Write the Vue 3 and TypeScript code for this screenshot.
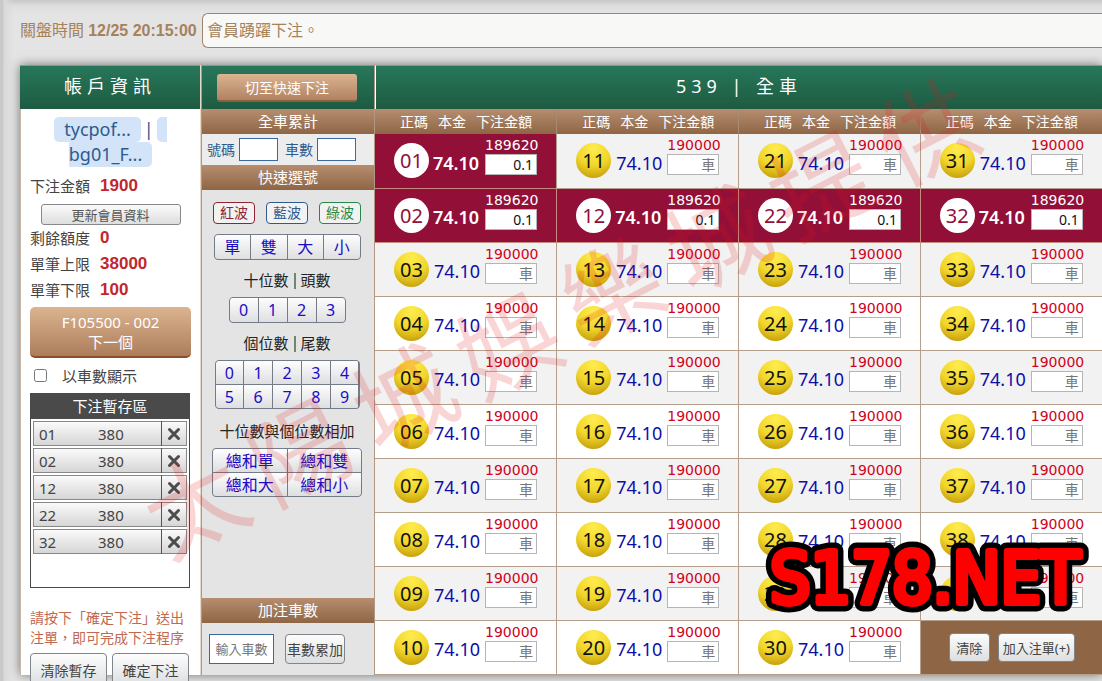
<script setup lang="ts">
import { reactive, ref } from 'vue'

interface Slot {
  no: string
  odds: string
}

const pad = (n: number): string => String(n).padStart(2, '0')

const rows: Slot[][] = Array.from({ length: 10 }, (_, r) =>
  [0, 10, 20, 30]
    .map((base) => base + r + 1)
    .filter((n) => n < 40)
    .map((n) => ({ no: pad(n), odds: '74.10' })),
)

const stakes = reactive<Record<string, string>>({
  '01': '0.1',
  '02': '0.1',
  '12': '0.1',
  '22': '0.1',
  '32': '0.1',
})

const pending = ref(['01', '02', '12', '22', '32'].map((no) => ({ no, amount: 380 })))
const showCars = ref(false)
const limitFor = (no: string): string => (stakes[no] ? '189620' : '190000')

const limits = [
  { label: '剩餘額度', value: '0' },
  { label: '單筆上限', value: '38000' },
  { label: '單筆下限', value: '100' },
]
const waves = [
  { text: '紅波', tone: 'red' },
  { text: '藍波', tone: 'blue' },
  { text: '綠波', tone: 'green' },
]
const kinds = ['單', '雙', '大', '小']
const heads = ['0', '1', '2', '3']
const tails = ['0', '1', '2', '3', '4', '5', '6', '7', '8', '9']
const sums = ['總和單', '總和雙', '總和大', '總和小']
const watermark = [...'太陽城娛樂城提供']

function removeBet(no: string): void {
  pending.value = pending.value.filter((bet) => bet.no !== no)
}

function clearStakes(): void {
  Object.keys(stakes).forEach((key) => delete stakes[key])
}
</script>

<template>
  <div class="page">
    <header class="topbar">
      <div class="closing">關盤時間 <b>12/25 20:15:00</b></div>
      <div class="news">會員踴躍下注。</div>
    </header>

    <main class="board">
      <aside class="account">
        <h2 class="title">帳戶資訊</h2>
        <div class="account-body">
          <div class="names">
            <div class="name-line">
              <span class="tag">tycpof...</span><span class="bar">|</span><span class="tag-start"></span>
            </div>
            <div class="name-line"><span class="tag tag-end">bg01_F...</span></div>
          </div>
          <div class="info">下注金額 <b>1900</b></div>
          <button class="refresh" type="button">更新會員資料</button>
          <div v-for="item in limits" :key="item.label" class="info">
            {{ item.label }} <b>{{ item.value }}</b>
          </div>
          <button class="next" type="button">F105500 - 002<br />下一個</button>
          <label class="check"><input v-model="showCars" type="checkbox" />以車數顯示</label>
          <section class="pending">
            <h3>下注暫存區</h3>
            <ul>
              <li v-for="bet in pending" :key="bet.no">
                <span class="bet-no">{{ bet.no }}</span>
                <span class="bet-amount">{{ bet.amount }}</span>
                <button type="button" :aria-label="`刪除 ${bet.no}`" @click="removeBet(bet.no)">
                  <svg width="14" height="14" viewBox="0 0 14 14">
                    <path d="M2.5 2.5 11.5 11.5M11.5 2.5 2.5 11.5" fill="none" stroke="#4c4c4c" stroke-width="3" stroke-linecap="round" />
                  </svg>
                </button>
              </li>
            </ul>
          </section>
          <p class="hint">請按下「確定下注」送出注單，即可完成下注程序</p>
          <div class="confirm">
            <button type="button">清除暫存</button>
            <button type="button">確定下注</button>
          </div>
        </div>
      </aside>

      <section class="quick">
        <div class="title"><button class="switch" type="button">切至快速下注</button></div>
        <h3 class="strip">全車累計</h3>
        <div class="totals">
          <label for="sum-no">號碼</label><input id="sum-no" type="text" />
          <label for="sum-car">車數</label><input id="sum-car" type="text" />
        </div>
        <h3 class="strip">快速選號</h3>
        <div class="picker">
          <div class="waves">
            <button v-for="w in waves" :key="w.text" type="button" :class="w.tone">{{ w.text }}</button>
          </div>
          <div class="keys keys-kind">
            <button v-for="k in kinds" :key="k" type="button">{{ k }}</button>
          </div>
          <p>十位數<i></i>頭數</p>
          <div class="keys keys-head">
            <button v-for="k in heads" :key="k" type="button">{{ k }}</button>
          </div>
          <p>個位數<i></i>尾數</p>
          <div class="keys keys-tail">
            <button v-for="k in tails" :key="k" type="button">{{ k }}</button>
          </div>
          <p class="wide">十位數與個位數相加</p>
          <div class="keys keys-sum">
            <button v-for="k in sums" :key="k" type="button">{{ k }}</button>
          </div>
        </div>
        <h3 class="strip">加注車數</h3>
        <div class="add">
          <input type="text" placeholder="輸入車數" aria-label="輸入車數" />
          <button type="button">車數累加</button>
        </div>
      </section>

      <section class="game">
        <h2 class="title">539 | 全車</h2>
        <table>
          <thead>
            <tr>
              <th v-for="n in 4" :key="n" scope="col">
                <span class="heads"><span>正碼</span><span>本金</span><span>下注金額</span></span>
              </th>
            </tr>
          </thead>
          <tbody>
            <tr v-for="(row, r) in rows" :key="r">
              <td v-for="slot in row" :key="slot.no" :class="{ picked: stakes[slot.no] }">
                <div class="slot">
                  <span class="ball">{{ slot.no }}</span>
                  <span class="odds">{{ slot.odds }}</span>
                  <label class="stake">
                    <span>{{ limitFor(slot.no) }}</span>
                    <input v-model="stakes[slot.no]" type="text" placeholder="車" />
                  </label>
                </div>
              </td>
              <td v-if="row.length < 4" class="actions">
                <div>
                  <button type="button" @click="clearStakes">清除</button>
                  <button type="button">加入注單(+)</button>
                </div>
              </td>
            </tr>
          </tbody>
        </table>
      </section>
    </main>

    <div class="watermark" aria-hidden="true">
      <span v-for="(ch, i) in watermark" :key="i">{{ ch }}</span>
    </div>
    <svg class="brand" width="344" height="92" viewBox="0 0 344 92">
      <text x="172" y="71" text-anchor="middle" class="brand-edge">S178.NET</text>
      <text x="172" y="71" text-anchor="middle" class="brand-face" aria-hidden="true">S178.NET</text>
    </svg>
  </div>
</template>

<style>
body {
  margin: 0;
}
</style>

<style scoped>
.page,
.page * {
  box-sizing: border-box;
}
.page {
  position: relative;
  height: 100vh;
  overflow: hidden;
  padding-left: 20px;
  background:
    linear-gradient(90deg, #c9c9c9 0, #c9c9c9 3px, #dadada 4px, rgba(226, 226, 226, 0) 14px),
    linear-gradient(#c8c8c8 0, #dedede 6px, #e4e4e4 14px, #e4e4e4);
  font-family: 'Noto Sans', 'Noto Sans CJK TC', sans-serif;
  font-size: 15px;
  line-height: 20px;
  color: #444;
}
button,
input {
  font-family: inherit;
  margin: 0;
  padding: 0;
}
button {
  cursor: pointer;
}
h2,
h3,
p,
ul {
  margin: 0;
  padding: 0;
  font-weight: 400;
  list-style: none;
}

.topbar {
  display: flex;
  align-items: center;
  height: 65px;
  padding: 0 0 5px;
  font-size: 16px;
  color: #a5825c;
}
.closing {
  width: 182px;
  white-space: nowrap;
}
.closing b,
.info b {
  font-family: 'Liberation Sans', Arial, sans-serif;
}
.news {
  flex: 1;
  height: 35px;
  padding-left: 4px;
  line-height: 33px;
  border: 1px solid #a08468;
  border-right: 0;
  border-radius: 6px 0 0 6px;
  background: #f8f8f6;
}

.board {
  display: grid;
  grid-template-columns: 181px 174px 1fr;
  box-shadow: 0 0 10px rgba(0, 0, 0, 0.5);
  background: #fff;
}
.title {
  height: 44px;
  line-height: 41px;
  text-align: center;
  font-size: 18px;
  letter-spacing: 5px;
  color: #fff;
  background: linear-gradient(#27775a, #1d5b42);
  border-top: 1px solid #a58c74;
}

.account {
  border-left: 1px solid #c9b8a8;
  border-right: 1px solid #e6d8c8;
}
.account .title {
  margin-left: -1px;
}
.account-body {
  padding: 8px 9px 0;
}
.names {
  font-size: 18px;
  line-height: 25px;
  color: #2d5b8e;
  margin-bottom: 6px;
}
.name-line {
  display: flex;
  justify-content: center;
}
.tag {
  padding: 0 10px;
  border-radius: 5px;
  background: #d3e3f8;
}
.tag-end {
  padding-left: 0;
  border-radius: 0 5px 5px 0;
}
.bar {
  width: 16px;
  text-align: center;
}
.tag-start {
  width: 10px;
  border-radius: 5px 0 0 5px;
  background: #d3e3f8;
}
.info {
  display: flex;
  gap: 10px;
  height: 26px;
  line-height: 26px;
}
.info b {
  font-size: 17px;
  color: #c1272d;
}
.refresh {
  display: block;
  width: 140px;
  height: 21px;
  margin: 5px auto 0;
  line-height: 18px;
  font-size: 13px;
  color: #555;
  border: 1px solid #888;
  border-radius: 3px;
  background: linear-gradient(#fafafa, #dcdfdd);
}
.next {
  display: block;
  width: 100%;
  height: 51px;
  margin-top: 4px;
  line-height: 20px;
  font-size: 15px;
  color: #fff;
  border: 0;
  border-bottom: 2px solid #8a4f2a;
  border-radius: 5px;
  background: linear-gradient(#dcb48f, #ac7d5c);
}
.check {
  display: flex;
  align-items: center;
  gap: 15px;
  height: 35px;
  padding-left: 4px;
}
.check input {
  width: 13px;
  height: 13px;
}
.pending {
  height: 195px;
  margin-right: 1px;
  border: 1px solid #4a4a4a;
}
.pending h3 {
  height: 25px;
  line-height: 25px;
  text-align: center;
  font-size: 15px;
  color: #fff;
  background: #4a4a4a;
}
.pending ul {
  display: grid;
  gap: 2px;
  padding: 2px;
}
.pending li {
  display: flex;
  align-items: center;
  height: 25px;
  padding-left: 5px;
  border: 1px solid #888;
  background: linear-gradient(#fafafa, #d6d6d6);
}
.bet-no {
  width: 40px;
}
.bet-amount {
  flex: 1;
  padding-left: 19px;
}
.pending li button {
  display: flex;
  align-items: center;
  justify-content: center;
  width: 25px;
  height: 25px;
  border: 0;
  border-left: 1px solid #555;
  background: none;
}
.hint {
  margin: 20px 0 5px;
  font-size: 14px;
  line-height: 20px;
  color: #c0694f;
}
.confirm {
  display: flex;
  gap: 5px;
  margin-bottom: -12px;
}
.confirm button {
  width: 77px;
  height: 33px;
  font-size: 14px;
}
.confirm button,
.add button,
.actions button {
  color: #444;
  white-space: nowrap;
  border: 1px solid #7f858b;
  border-radius: 4px;
  background: linear-gradient(#fdfdfd, #dcdedf);
}

.quick {
  display: flex;
  flex-direction: column;
  border-right: 1px solid #b09884;
  border-left: 1px solid #b09884;
  background: #e4e4e4;
}
.quick .title {
  display: flex;
  align-items: center;
  justify-content: center;
  padding-right: 2px;
}
.switch {
  width: 140px;
  height: 28px;
  font-size: 14px;
  color: #fff;
  border: 0;
  border-bottom: 2px solid #8f6040;
  border-radius: 3px;
  background: linear-gradient(#dbb491, #b08262);
}
.strip {
  height: 25px;
  line-height: 25px;
  text-align: center;
  font-size: 15px;
  color: #fff;
  background: linear-gradient(#b68e6f, #8e6646);
}
.totals {
  display: flex;
  align-items: center;
  height: 31px;
  padding-left: 5px;
  font-size: 14px;
  color: #2d5b8e;
  background: #ececec;
}
.totals input {
  width: 39px;
  height: 23px;
  margin: 0 7px 0 4px;
  border: 1px solid #3a6a9d;
  border-radius: 0;
  background: #fff;
}
.totals input:last-child {
  margin-right: 0;
}
.picker {
  flex: 1;
  display: flex;
  flex-direction: column;
  align-items: center;
  padding: 12px 2px 0 0;
}
.picker p {
  display: flex;
  height: 20px;
  margin: 10px 0 7px;
  color: #222;
}
.picker p.wide {
  margin: 12px 0 7px;
}
.picker i {
  width: 2px;
  height: 16px;
  margin: 3px 5px;
  background: #71876a;
}
.waves {
  display: flex;
  gap: 11px;
  margin-bottom: 10px;
}
.waves button {
  width: 42px;
  height: 22px;
  line-height: 18px;
  font-size: 14px;
  border: 1px solid currentColor;
  border-radius: 4px;
  background: #f2f2f2;
}
.waves .red {
  color: #8f2434;
}
.waves .blue {
  color: #2d5b8e;
}
.waves .green {
  color: #25894c;
}
.keys {
  display: grid;
  gap: 1px;
  border: 1px solid #737c88;
  border-radius: 4px;
  overflow: hidden;
  background: #737c88;
}
.keys button {
  height: 24px;
  font-size: 16px;
  line-height: 22px;
  color: #1a0dc4;
  border: 0;
  background: linear-gradient(#fdfdfd, #dedfe1);
}
.keys-kind {
  width: 147px;
  grid-template-columns: repeat(4, 1fr);
}
.keys-head {
  width: 117px;
  grid-template-columns: repeat(4, 1fr);
}
.keys-tail {
  width: 145px;
  grid-template-columns: repeat(5, 1fr);
}
.keys-sum {
  width: 150px;
  grid-template-columns: repeat(2, 1fr);
}
.keys-tail button,
.keys-sum button {
  height: 23px;
}
.add {
  display: flex;
  gap: 11px;
  height: 52px;
  padding: 11px 0 0 7px;
}
.add input {
  width: 65px;
  height: 30px;
  text-align: center;
  font-size: 13px;
  border: 1px solid #3a6a9d;
  border-radius: 0;
  background: #fff;
}
.add button {
  width: 60px;
  height: 30px;
  font-size: 14px;
}

.game {
  min-width: 0;
}
.game .title {
  border-left: 1px solid #fff;
}
table {
  width: 100%;
  table-layout: fixed;
  border-collapse: collapse;
}
th {
  height: 25px;
  padding: 0;
  font-size: 14px;
  font-weight: 400;
  color: #fff;
  background: linear-gradient(#b68e6f, #8e6646);
  border-left: 1px solid #a58c74;
}
th:first-child,
td:first-child {
  border-left: 0;
}
.heads {
  display: flex;
  gap: 10px;
  padding-left: 25px;
  white-space: nowrap;
}
td {
  height: 54px;
  padding: 0;
  vertical-align: top;
  border-left: 1px solid #b39f8c;
  border-bottom: 1px solid #b39f8c;
  background: #fff;
}
tr:nth-child(odd) td {
  background: #f2f2f2;
}
tbody tr:last-child td {
  background: #fff;
}
tbody tr td.picked {
  background: #920f38;
  border-color: #c98b7c;
}
.slot {
  display: flex;
  align-items: center;
  height: 53px;
  padding-left: 19px;
}
.ball {
  width: 35px;
  height: 35px;
  border-radius: 50%;
  line-height: 35px;
  text-align: center;
  font-size: 20px;
  color: #111;
  background: radial-gradient(circle at 50% 15%, #ffec4e, #f1d62c 50%, #b98f00 100%);
}
.odds {
  width: 52px;
  padding: 4px 0 0 5px;
  font-size: 18px;
  color: #0d0da8;
}
.stake {
  display: flex;
  flex-direction: column;
  width: 54px;
  padding: 2px 0 0 4px;
  height: 53px;
}
.stake span {
  font-family: 'DejaVu Sans', sans-serif;
  font-size: 14px;
  line-height: 18px;
  color: #d0021b;
}
.stake input {
  width: 52px;
  height: 21px;
  padding: 0 3px;
  text-align: right;
  font-size: 14px;
  color: #111;
  border: 1px solid #b5b5b5;
  border-radius: 0;
  background: #fff;
}
input::placeholder {
  color: #777;
  opacity: 1;
}
.picked .ball {
  color: #920f38;
  background: #fff;
}
.picked .odds {
  padding-left: 4px;
  font-weight: 600;
  color: #fff;
}
.picked .stake span {
  color: #fff;
}
tbody tr td.actions {
  background: #8e6646;
}
.actions div {
  display: flex;
  gap: 8px;
  padding: 12px 0 0 28px;
}
.actions button {
  height: 29px;
  padding: 0 4px;
  font-size: 13px;
}
.actions button:first-child {
  width: 41px;
}

.watermark {
  position: absolute;
  left: 100px;
  top: 265px;
  width: 920px;
  display: flex;
  justify-content: space-between;
  font-size: 100px;
  line-height: 104px;
  color: rgba(230, 20, 30, 0.18);
  transform: rotate(-27deg);
  pointer-events: none;
}
.brand {
  position: absolute;
  left: 753px;
  top: 532px;
  pointer-events: none;
  stroke-linejoin: round;
}
.brand text {
  font-family: 'DejaVu Sans Condensed', 'DejaVu Sans', sans-serif;
  font-size: 71px;
}
.brand-edge {
  fill: #000;
  stroke: #000;
  stroke-width: 17px;
}
.brand-face {
  fill: #f00;
  stroke: #f00;
  stroke-width: 6px;
}
</style>
